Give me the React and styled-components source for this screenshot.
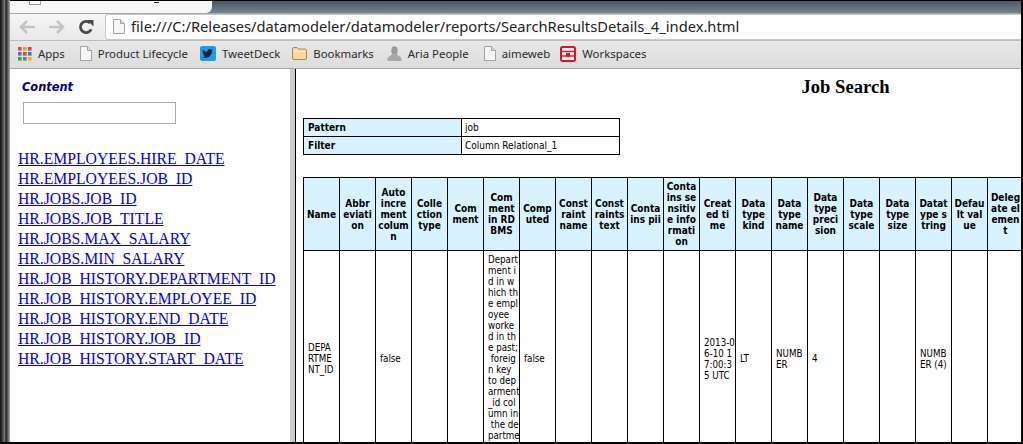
import styled, { createGlobalStyle } from 'styled-components';
import { FaTwitter } from 'react-icons/fa';

const GlobalStyle = createGlobalStyle`
  html, body {
    margin: 0;
    padding: 0;
    background: #fff;
  }
`;

const Screen = styled.div`
  width: 1023px;
  height: 444px;
  box-sizing: border-box;
  display: flex;
  overflow: hidden;
  background: #fff;
  border-right: 2px solid #000;
  border-bottom: 2px solid #000;
`;

const WindowEdge = styled.div`
  width: 10px;
  flex: none;
  background: linear-gradient(90deg, #111 0, #333 20%, #777 45%, #222 60%, #555 75%, #aaa 100%);
`;

const Browser = styled.div`
  flex: 1;
  min-width: 0;
  display: flex;
  flex-direction: column;
`;

const TabStrip = styled.div`
  height: 14px;
  flex: none;
  display: flex;
  background: linear-gradient(180deg, #4d5a66 0, #75838f 100%);
  border-top: 1px solid #000;
  border-bottom: 1px solid #a8a8a8;
  box-sizing: border-box;
`;

const Tab = styled.div`
  width: 202px;
  background: #f7f7f7;
  border-bottom-right-radius: 6px;
  display: flex;
`;

const TabFavicon = styled.div`
  width: 10px;
  height: 3px;
  margin-left: 19px;
  background: #fff;
  border: 1px solid #999;
  border-top: none;
`;

const TabMark = styled.div`
  width: 5px;
  height: 1px;
  margin: 1px 0 0 113px;
  background: #222;
`;

const Toolbar = styled.div`
  height: 26px;
  flex: none;
  display: flex;
  align-items: center;
  background: linear-gradient(180deg, #f6f6f6 0, #e9e9e9 100%);
`;

const NavButton = styled.div`
  width: 29px;
  height: 26px;
  flex: none;
  display: flex;
  align-items: center;
  justify-content: center;
`;

const NavGroup = styled.div`
  width: 95px;
  flex: none;
  display: flex;
  padding-left: 3px;
  box-sizing: border-box;
`;

const Omnibox = styled.div`
  flex: 1;
  height: 26px;
  box-sizing: border-box;
  display: flex;
  align-items: center;
  gap: 6px;
  padding: 0 0 2px 7px;
  background: #fff;
  border: 1px solid #c8c8c8;
  border-right: none;
  border-radius: 3px 0 0 3px;
  font-family: "Noto Sans", sans-serif;
  font-size: 14.7px;
  color: #222;
  white-space: nowrap;
`;

const BookmarkBar = styled.div`
  height: 29px;
  flex: none;
  box-sizing: border-box;
  display: flex;
  align-items: center;
  padding: 0 0 2px 8px;
  background: linear-gradient(180deg, #e8e8e8 0, #dcdcdc 100%);
  border-top: 1px solid #bcbcbc;
  border-bottom: 1px solid #a6a6a6;
`;

const Bookmark = styled.div`
  display: flex;
  align-items: center;
  gap: 6px;
  margin-right: ${(props) => props.$space}px;
  font-family: "Noto Sans", sans-serif;
  font-size: 11.4px;
  color: #2a2a2a;
  white-space: nowrap;
`;

const Frames = styled.div`
  flex: 1;
  min-height: 0;
  display: flex;
`;

const LeftFrame = styled.div`
  width: 280px;
  flex: none;
  box-sizing: border-box;
  padding: 11px 0 0 8px;
  background: #fff;
`;

const ContentLabel = styled.div`
  margin-left: 4px;
  font-family: "DejaVu Sans", sans-serif;
  font-size: 11.4px;
  line-height: 15px;
  font-weight: bold;
  font-style: italic;
  color: #000080;
`;

const SearchBox = styled.input`
  display: block;
  width: 153px;
  height: 22px;
  box-sizing: border-box;
  margin: 7px 0 25px 5px;
  padding: 0;
  background: #fff;
  border: 1px solid #a9a9a9;
`;

const LinkList = styled.div`
  display: flex;
  flex-direction: column;
  align-items: flex-start;
`;

const ColumnLink = styled.a`
  font-family: "Liberation Serif", serif;
  font-size: 15.7px;
  line-height: 20px;
  color: #0000ee;
  text-decoration: underline;
  white-space: nowrap;
`;

const Splitter = styled.div`
  width: 6px;
  flex: none;
  box-sizing: border-box;
  background: #cdcdcd;
  border-right: 1px solid #000;
`;

const RightFrame = styled.div`
  flex: 1;
  min-width: 0;
  overflow: hidden;
  background: #fff;
`;

const RightPage = styled.div`
  width: 1092px;
  padding: 7px 0 0 7px;
  box-sizing: border-box;
`;

const Title = styled.h1`
  margin: 0 0 21px;
  font-family: "Liberation Serif", serif;
  font-size: 18.6px;
  line-height: 21px;
  font-weight: bold;
  color: #000;
  text-align: center;
`;

const FilterTable = styled.table`
  width: 317px;
  table-layout: fixed;
  border-collapse: collapse;
  margin-bottom: 22px;
  font-family: "DejaVu Sans Condensed", "DejaVu Sans", sans-serif;
  font-size: 10px;
  color: #000;
`;

const FilterLabel = styled.th`
  width: 158px;
  height: 18px;
  box-sizing: border-box;
  padding: 0 4px;
  text-align: left;
  background: #d8f3ff;
  border: 1px solid #000;
`;

const FilterValue = styled.td`
  height: 18px;
  box-sizing: border-box;
  padding: 0 3px;
  border: 1px solid #000;
`;

const ResultTable = styled.table`
  width: 720px;
  table-layout: fixed;
  border-collapse: collapse;
  font-family: "DejaVu Sans Condensed", "DejaVu Sans", sans-serif;
  font-size: 10px;
  line-height: 11px;
  color: #000;
`;

const HeadCell = styled.th`
  width: 36px;
  height: 73px;
  box-sizing: border-box;
  padding: 0;
  text-align: center;
  vertical-align: middle;
  white-space: pre;
  background: #d8f3ff;
  border: 1px solid #000;
`;

const BodyCell = styled.td`
  width: 36px;
  height: 216px;
  box-sizing: border-box;
  padding: 0 0 0 4px;
  text-align: left;
  vertical-align: middle;
  white-space: pre;
  font-size: 9.7px;
  border: 1px solid #000;
`;

const TweetBadge = styled.div`
  width: 16px;
  height: 15px;
  display: flex;
  align-items: center;
  justify-content: center;
  background: #1e9be8;
  border-radius: 2px;
`;

function ArrowIcon({ flip, color }) {
  return (
    <svg width="17" height="14" viewBox="0 0 17 14" style={flip ? { transform: 'scaleX(-1)' } : undefined}>
      <path d="M8 1 L2 7 L8 13 M2 7 H16" fill="none" stroke={color} strokeWidth="2.6" />
    </svg>
  );
}

function ReloadIcon() {
  return (
    <svg width="16" height="16" viewBox="0 0 16 16">
      <path d="M13.2 10.2 A5.6 5.6 0 1 1 12 4" fill="none" stroke="#4a4a4a" strokeWidth="2.8" />
      <path d="M9 1 H15.5 V7.5 Z" fill="#4a4a4a" />
    </svg>
  );
}

function PageIcon() {
  return (
    <svg width="12" height="15" viewBox="0 0 12 15">
      <path d="M0.5 0.5 H7.5 L11.5 4.5 V14.5 H0.5 Z" fill="#f7f7f7" stroke="#a3a3a3" />
      <path d="M7.5 0.5 V4.5 H11.5" fill="#dcdcdc" stroke="#a3a3a3" />
    </svg>
  );
}

function AppsIcon() {
  const colors = ['#d8483b', '#e8a32e', '#d8483b', '#3a78d8', '#d8483b', '#3a78d8', '#3d9d55', '#3d9d55', '#f2b21d'];
  return (
    <svg width="14" height="14" viewBox="0 0 14 14">
      {colors.map((color, i) => (
        <rect key={i} x={(i % 3) * 5} y={Math.floor(i / 3) * 5} width="3.6" height="3.6" fill={color} />
      ))}
    </svg>
  );
}

function FolderIcon() {
  return (
    <svg width="15" height="13" viewBox="0 0 15 13">
      <path d="M0.5 2 Q0.5 0.5 2 0.5 H5 L6.5 2 H13 Q14.5 2 14.5 3.5 V11 Q14.5 12.5 13 12.5 H2 Q0.5 12.5 0.5 11 Z" fill="#f7d898" stroke="#a58a58" />
      <path d="M1.5 4.5 H13.5" stroke="#fff1cf" />
    </svg>
  );
}

function PersonIcon() {
  return (
    <svg width="15" height="15" viewBox="0 0 15 15">
      <ellipse cx="7.5" cy="4.5" rx="3.2" ry="4.3" fill="#9a9a9a" />
      <path d="M5.5 8 L0.5 12 V15 H14.5 V12 L9.5 8 Z" fill="#a8a8a8" />
    </svg>
  );
}

function WorkspacesIcon() {
  return (
    <svg width="16" height="16" viewBox="0 0 16 16">
      <rect x="1" y="1" width="14" height="14" rx="1.5" fill="#fff" stroke="#e0141c" strokeWidth="2" />
      <path d="M1 5.5 H15 M1 10 H15" stroke="#e0141c" strokeWidth="1.6" />
      <rect x="6" y="7" width="4" height="3.4" fill="#e0141c" />
    </svg>
  );
}

const links = [
  'HR.EMPLOYEES.HIRE_DATE',
  'HR.EMPLOYEES.JOB_ID',
  'HR.JOBS.JOB_ID',
  'HR.JOBS.JOB_TITLE',
  'HR.JOBS.MAX_SALARY',
  'HR.JOBS.MIN_SALARY',
  'HR.JOB_HISTORY.DEPARTMENT_ID',
  'HR.JOB_HISTORY.EMPLOYEE_ID',
  'HR.JOB_HISTORY.END_DATE',
  'HR.JOB_HISTORY.JOB_ID',
  'HR.JOB_HISTORY.START_DATE',
];

const headers = [
  'Name',
  'Abbr\neviati\non',
  'Auto\nincre\nment\ncolum\nn',
  'Colle\nction\ntype',
  'Com\nment',
  'Com\nment\nin RD\nBMS',
  'Comp\nuted',
  'Const\nraint\nname',
  'Const\nraints\ntext',
  'Conta\nins pii',
  'Conta\nins se\nnsitiv\ne info\nrmati\non',
  'Creat\ned ti\nme',
  'Data\ntype\nkind',
  'Data\ntype\nname',
  'Data\ntype\npreci\nsion',
  'Data\ntype\nscale',
  'Data\ntype\nsize',
  'Datat\nype s\ntring',
  'Defau\nlt val\nue',
  'Deleg\nate el\nemen\nt',
];

const comment = [
  'Depart', 'ment i', 'd in w', 'hich th', 'e empl', 'oyee', 'worke', 'd in th', 'e past;',
  ' foreig', 'n key', 'to dep', 'arment', '_id col', 'umn in', ' the de', 'partme', 'nt tabl', 'e.',
].join('\n');

const row = [
  'DEPA\nRTME\nNT_ID', '', 'false', '', '', comment, 'false', '', '', '', '',
  '2013-0\n6-10 1\n7:00:3\n5 UTC', 'LT', 'NUMB\nER', '4', '', '', 'NUMB\nER (4)', '', '',
];

export default function App() {
  return (
    <>
      <GlobalStyle />
      <Screen>
        <WindowEdge />
        <Browser>
          <TabStrip>
            <Tab>
              <TabFavicon />
              <TabMark />
            </Tab>
          </TabStrip>
          <Toolbar>
            <NavGroup>
              <NavButton><ArrowIcon color="#c4c4c4" /></NavButton>
              <NavButton><ArrowIcon flip color="#c4c4c4" /></NavButton>
              <NavButton><ReloadIcon /></NavButton>
            </NavGroup>
            <Omnibox>
              <PageIcon />
              file:///C:/Releases/datamodeler/datamodeler/reports/SearchResultsDetails_4_index.html
            </Omnibox>
          </Toolbar>
          <BookmarkBar>
            <Bookmark $space={15}><AppsIcon />Apps</Bookmark>
            <Bookmark $space={12}><PageIcon />Product Lifecycle</Bookmark>
            <Bookmark $space={12}><TweetBadge><FaTwitter size={11} color="#10233a" /></TweetBadge>TweetDeck</Bookmark>
            <Bookmark $space={13}><FolderIcon />Bookmarks</Bookmark>
            <Bookmark $space={15}><PersonIcon />Aria People</Bookmark>
            <Bookmark $space={10}><PageIcon />aimeweb</Bookmark>
            <Bookmark $space={0}><WorkspacesIcon />Workspaces</Bookmark>
          </BookmarkBar>
          <Frames>
            <LeftFrame>
              <ContentLabel>Content</ContentLabel>
              <SearchBox type="text" />
              <LinkList>
                {links.map((link) => (
                  <ColumnLink key={link} href="#">{link}</ColumnLink>
                ))}
              </LinkList>
            </LeftFrame>
            <Splitter />
            <RightFrame>
              <RightPage>
                <Title>Job Search</Title>
                <FilterTable>
                  <tbody>
                    <tr>
                      <FilterLabel>Pattern</FilterLabel>
                      <FilterValue>job</FilterValue>
                    </tr>
                    <tr>
                      <FilterLabel>Filter</FilterLabel>
                      <FilterValue>Column Relational_1</FilterValue>
                    </tr>
                  </tbody>
                </FilterTable>
                <ResultTable>
                  <thead>
                    <tr>
                      {headers.map((header) => (
                        <HeadCell key={header}>{header}</HeadCell>
                      ))}
                    </tr>
                  </thead>
                  <tbody>
                    <tr>
                      {row.map((value, i) => (
                        <BodyCell key={i}>{value}</BodyCell>
                      ))}
                    </tr>
                  </tbody>
                </ResultTable>
              </RightPage>
            </RightFrame>
          </Frames>
        </Browser>
      </Screen>
    </>
  );
}
